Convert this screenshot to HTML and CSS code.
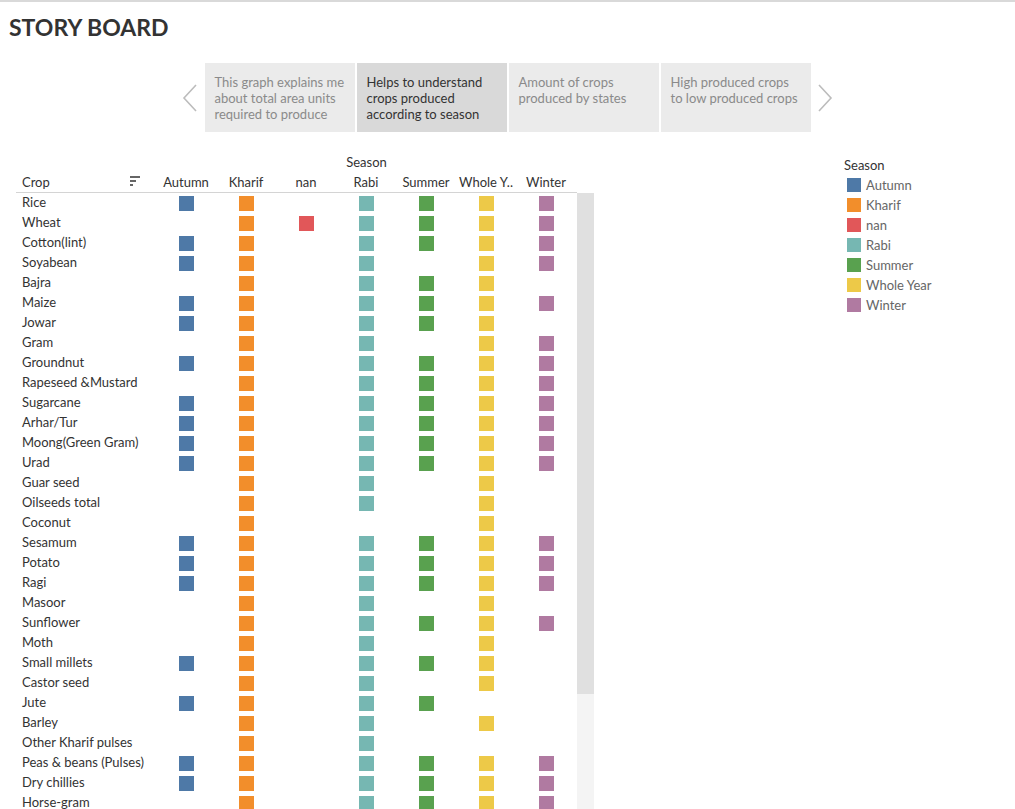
FILE: index.html
```html
<!DOCTYPE html>
<html>
<head>
<meta charset="utf-8">
<link rel="stylesheet" href="styles.css">
</head>
<body>
<div class="page">
  <h1 class="title">STORY BOARD</h1>
  <div class="story-nav">
    <div class="arrow">
      <svg width="16" height="28" viewBox="0 0 16 28"><polyline points="14,1 2,14 14,27" fill="none" stroke="#bcbcbc" stroke-width="1.6"/></svg>
    </div>
    <div class="tab">This graph explains me about total area units required to produce</div>
    <div class="tab active">Helps to understand crops produced according to season</div>
    <div class="tab">Amount of crops produced by states</div>
    <div class="tab">High produced crops to low produced crops</div>
    <div class="arrow right">
      <svg width="16" height="28" viewBox="0 0 16 28"><polyline points="2,1 14,14 2,27" fill="none" stroke="#bcbcbc" stroke-width="1.6"/></svg>
    </div>
  </div>

  <div class="main">
    <div class="chart">
      <div class="season-title">Season</div>
      <div class="col-head">
        <div class="crop-head"><span>Crop</span>
          <span class="sort-icon"><i class="b1"></i><i class="b2"></i><i class="b3"></i></span>
        </div>
        <div class="ch">Autumn</div>
        <div class="ch">Kharif</div>
        <div class="ch">nan</div>
        <div class="ch">Rabi</div>
        <div class="ch">Summer</div>
        <div class="ch">Whole Y..</div>
        <div class="ch">Winter</div>
      </div>
      <div class="body">
        <div class="rows" id="rows"></div>
        <div class="scrollbar"><div class="thumb"></div></div>
      </div>
    </div>

    <div class="legend">
      <div class="legend-title">Season</div>
      <div class="li"><span class="sw c-a"></span>Autumn</div>
      <div class="li"><span class="sw c-k"></span>Kharif</div>
      <div class="li"><span class="sw c-n"></span>nan</div>
      <div class="li"><span class="sw c-r"></span>Rabi</div>
      <div class="li"><span class="sw c-s"></span>Summer</div>
      <div class="li"><span class="sw c-w"></span>Whole Year</div>
      <div class="li"><span class="sw c-i"></span>Winter</div>
    </div>
  </div>
</div>
<script src="app.js"></script>
</body>
</html>
```

FILE: app.js
```js
var data = [
  ["Rice", "AKRSWI"],
  ["Wheat", "KNRSWI"],
  ["Cotton(lint)", "AKRSWI"],
  ["Soyabean", "AKRWI"],
  ["Bajra", "KRSW"],
  ["Maize", "AKRSWI"],
  ["Jowar", "AKRSW"],
  ["Gram", "KRWI"],
  ["Groundnut", "AKRSWI"],
  ["Rapeseed &Mustard", "KRSWI"],
  ["Sugarcane", "AKRSWI"],
  ["Arhar/Tur", "AKRSWI"],
  ["Moong(Green Gram)", "AKRSWI"],
  ["Urad", "AKRSWI"],
  ["Guar seed", "KRW"],
  ["Oilseeds total", "KRW"],
  ["Coconut", "KW"],
  ["Sesamum", "AKRSWI"],
  ["Potato", "AKRSWI"],
  ["Ragi", "AKRSWI"],
  ["Masoor", "KRW"],
  ["Sunflower", "KRSWI"],
  ["Moth", "KRW"],
  ["Small millets", "AKRSW"],
  ["Castor seed", "KRW"],
  ["Jute", "AKRS"],
  ["Barley", "KRW"],
  ["Other Kharif pulses", "KR"],
  ["Peas & beans (Pulses)", "AKRSWI"],
  ["Dry chillies", "AKRSWI"],
  ["Horse-gram", "KRSWI"]
];
var cols = [["A","c-a"],["K","c-k"],["N","c-n"],["R","c-r"],["S","c-s"],["W","c-w"],["I","c-i"]];
var rows = document.getElementById("rows");
data.forEach(function (d) {
  var row = document.createElement("div");
  row.className = "row";
  var lab = document.createElement("div");
  lab.className = "crop";
  lab.textContent = d[0];
  row.appendChild(lab);
  cols.forEach(function (c) {
    var cell = document.createElement("div");
    cell.className = "cell";
    if (d[1].indexOf(c[0]) >= 0) {
      var sq = document.createElement("span");
      sq.className = "sq " + c[1];
      cell.appendChild(sq);
    }
    row.appendChild(cell);
  });
  rows.appendChild(row);
});
```

FILE: styles.css
```css
html, body {
  margin: 0;
  padding: 0;
  overflow: hidden;
  background: #fff;
}
body {
  font-family: Lato, "Open Sans", sans-serif;
  color: #333;
  font-size: 13px;
}
.page {
  border-top: 2px solid #d9d9d9;
  height: 807px;
  overflow: hidden;
}
.title {
  margin: 0;
  padding: 10px 0 0 9px;
  font-size: 23px;
  line-height: 30px;
  font-weight: 700;
  color: #333;
}
.story-nav {
  margin-top: 21px;
  display: flex;
  justify-content: center;
  align-items: stretch;
  gap: 2px;
  height: 69px;
}
.arrow {
  width: 25px;
  display: flex;
  align-items: center;
  justify-content: center;
}
.tab {
  width: 132px;
  padding: 11px 8px 0 10px;
  background: #ebebeb;
  color: #8a8a8a;
  font-size: 13px;
  line-height: 16px;
}
.tab.active {
  background: #d9d9d9;
  color: #333;
}
.main {
  display: flex;
  align-items: flex-start;
  margin-top: 20px;
}
.chart {
  margin-left: 16px;
  width: 578px;
}
.season-title {
  width: 561px;
  padding-left: 140px;
  box-sizing: border-box;
  text-align: center;
  line-height: 20px;
  height: 20px;
}
.col-head {
  display: grid;
  grid-template-columns: 140px repeat(7, 60px);
  width: 561px;
  height: 20px;
  line-height: 20px;
  border-bottom: 1px solid #d4d4d4;
}
.crop-head {
  display: flex;
  justify-content: space-between;
  align-items: center;
  padding: 0 16px 0 6px;
}
.sort-icon {
  display: flex;
  flex-direction: column;
  gap: 2px;
  width: 10px;
  margin-top: -3px;
}
.sort-icon i {
  display: block;
  height: 2px;
  background: #666;
}
.sort-icon .b1 { width: 10px; }
.sort-icon .b2 { width: 6px; }
.sort-icon .b3 { width: 3px; }
.ch {
  text-align: center;
  white-space: nowrap;
}
.body {
  display: flex;
  height: 620px;
  overflow: hidden;
}
.rows {
  width: 561px;
}
.row {
  display: grid;
  grid-template-columns: 140px repeat(7, 60px);
  height: 20px;
  align-items: center;
}
.crop {
  padding-left: 6px;
  white-space: nowrap;
  line-height: 18px;
  align-self: start;
}
.cell {
  display: flex;
  justify-content: center;
  align-items: center;
  height: 20px;
}
.sq {
  display: block;
  width: 15px;
  height: 15px;
  margin-left: 1px;
}
.scrollbar {
  width: 17px;
  background: #f4f4f4;
}
.thumb {
  height: 501px;
  background: #e0e0e0;
}
.legend {
  margin-left: 250px;
  margin-top: 3px;
}
.legend-title {
  line-height: 20px;
  color: #333;
}
.li {
  display: flex;
  align-items: center;
  height: 20px;
  color: #666;
  padding-left: 3px;
}
.sw {
  width: 14px;
  height: 14px;
  margin-right: 5px;
}
.c-a { background: #4e79a7; }
.c-k { background: #f28e2b; }
.c-n { background: #e15759; }
.c-r { background: #76b7b2; }
.c-s { background: #59a14f; }
.c-w { background: #edc948; }
.c-i { background: #b07aa1; }
```
